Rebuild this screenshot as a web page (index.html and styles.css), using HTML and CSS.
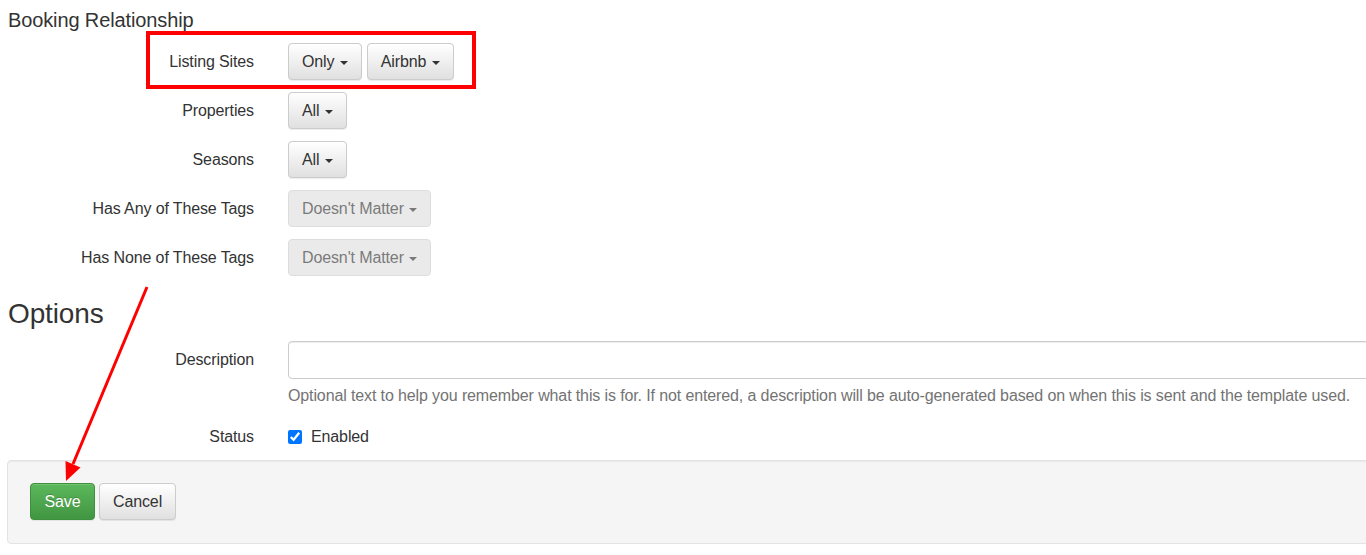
FILE: index.html
```html
<!DOCTYPE html>
<html lang="en">
<head>
    <meta charset="UTF-8">
    <title>Booking Relationship</title>
    <link rel="stylesheet" href="styles.css">
</head>
<body>
    <div class="page">
        <h4 class="section-title">Booking Relationship</h4>

        <div class="form-row">
            <label class="row-label">Listing Sites</label>
            <div class="row-control btn-group">
                <button class="btn">Only <span class="caret"></span></button>
                <button class="btn">Airbnb <span class="caret"></span></button>
            </div>
        </div>
        <div class="form-row">
            <label class="row-label">Properties</label>
            <div class="row-control">
                <button class="btn">All <span class="caret"></span></button>
            </div>
        </div>
        <div class="form-row">
            <label class="row-label">Seasons</label>
            <div class="row-control">
                <button class="btn">All <span class="caret"></span></button>
            </div>
        </div>
        <div class="form-row">
            <label class="row-label">Has Any of These Tags</label>
            <div class="row-control">
                <button class="btn disabled">Doesn't Matter <span class="caret"></span></button>
            </div>
        </div>
        <div class="form-row">
            <label class="row-label">Has None of These Tags</label>
            <div class="row-control">
                <button class="btn disabled">Doesn't Matter <span class="caret"></span></button>
            </div>
        </div>

        <h3 class="options-title">Options</h3>

        <div class="form-row desc-row">
            <label class="row-label">Description</label>
            <div class="row-control wide">
                <input type="text" class="text-input">
                <p class="help-block">Optional text to help you remember what this is for. If not entered, a description will be auto-generated based on when this is sent and the template used.</p>
            </div>
        </div>
        <div class="form-row status-row">
            <label class="row-label">Status</label>
            <div class="row-control">
                <label class="check"><input type="checkbox" checked> Enabled</label>
            </div>
        </div>

        <div class="form-footer">
            <button class="btn btn-success">Save</button>
            <button class="btn">Cancel</button>
        </div>
    </div>

    <!-- annotations -->
    <div class="highlight-box"></div>
    <svg class="arrow" width="200" height="220" viewBox="0 0 200 220">
        <line x1="147" y1="287" x2="73" y2="464" stroke="#ff0000" stroke-width="3" transform="translate(0,-280)"/>
        <polygon points="66,481 80.5,467.5 65.5,461" fill="#ff0000" transform="translate(0,-280)"/>
    </svg>
</body>
</html>
```

FILE: styles.css
```css
html, body {
    overflow: hidden;
}
body {
    margin: 0;
    font-family: "Liberation Sans", Arial, sans-serif;
    font-size: 16px;
    letter-spacing: -0.12px;
    color: #333;
    background: #fff;
    position: relative;
}
.page {
    width: 1420px;
    padding-left: 8px;
}
.section-title {
    margin: 9px 0 12px 0;
    font-size: 20px;
    line-height: 22px;
    font-weight: normal;
}
.options-title {
    margin: 22px 0 12px 0;
    font-size: 28px;
    line-height: 31px;
    font-weight: normal;
}
.form-row {
    display: flex;
    align-items: flex-start;
    margin-bottom: 12px;
}
.row-label {
    width: 246px;
    margin-right: 34px;
    text-align: right;
    line-height: 37px;
}
.btn-group {
    display: flex;
    gap: 5px;
}
.row-control.wide {
    flex: 1;
}
.btn {
    display: inline-block;
    padding: 6px 13px;
    font-family: inherit;
    font-size: 16px;
    letter-spacing: inherit;
    line-height: 23px;
    color: #333;
    border: 1px solid #ccc;
    border-radius: 4px;
    background-color: #e0e0e0;
    background-image: linear-gradient(to bottom, #fff 0, #e0e0e0 100%);
    box-shadow: inset 0 1px 0 rgba(255,255,255,.15), 0 1px 1px rgba(0,0,0,.075);
    cursor: pointer;
}
.btn.disabled {
    background-image: none;
    background-color: #e0e0e0;
    opacity: .65;
    box-shadow: none;
    cursor: not-allowed;
}
.btn-success {
    padding: 6px 13.5px;
    color: #fff;
    border-color: #3e8f3e;
    background-color: #419641;
    background-image: linear-gradient(to bottom, #5cb85c 0, #419641 100%);
    text-shadow: 0 -1px 0 rgba(0,0,0,.2);
}
.caret {
    display: inline-block;
    width: 0;
    height: 0;
    margin-left: 1px;
    vertical-align: middle;
    border-top: 4px solid;
    border-left: 4px solid transparent;
    border-right: 4px solid transparent;
}
.desc-row .row-label {
    line-height: 38px;
}
.text-input {
    display: block;
    box-sizing: border-box;
    width: 100%;
    height: 38px;
    padding: 6px 12px;
    font-family: inherit;
    font-size: 16px;
    border: 1px solid #ccc;
    border-radius: 4px;
    box-shadow: inset 0 1px 1px rgba(0,0,0,.075);
}
.help-block {
    margin: 5px 0 7px 0;
    line-height: 23px;
    color: #737373;
}
.status-row {
    margin-bottom: 12px;
}
.status-row .row-label {
    line-height: 22px;
}
.check {
    display: flex;
    align-items: center;
    gap: 9px;
    line-height: 22px;
}
.check input {
    width: 14px;
    height: 14px;
    margin: 0;
}
.form-footer {
    margin-left: -1px;
    padding: 22px 22px 23px 22px;
    background: #f5f5f5;
    border: 1px solid #e3e3e3;
    border-radius: 4px;
    box-shadow: inset 0 1px 1px rgba(0,0,0,.05);
    display: flex;
    gap: 4px;
}
.highlight-box {
    position: absolute;
    left: 146px;
    top: 31px;
    width: 330px;
    height: 58px;
    box-sizing: border-box;
    border: 4px solid #ff0000;
}
.arrow {
    position: absolute;
    left: 0;
    top: 280px;
}
```
